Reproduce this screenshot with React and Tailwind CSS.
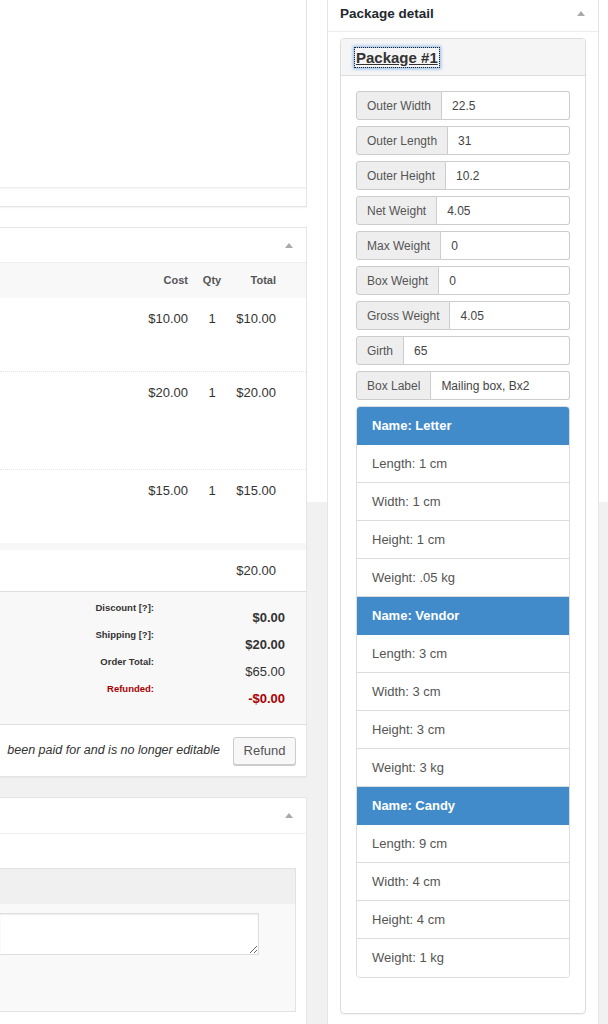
import React from "react";

function Tri() {
  return (
    <svg width="8" height="5" viewBox="0 0 8 5" className="block">
      <polygon points="4,0 8,5 0,5" fill="#aaaaaa" />
    </svg>
  );
}

function Cols({ cost, qty, total, className = "" }) {
  return (
    <div className={"flex justify-end pr-[30px] " + className}>
      <div className="w-[60px] text-right">{cost}</div>
      <div className="w-[48px] text-center">{qty}</div>
      <div className="w-[40px] text-right">{total}</div>
    </div>
  );
}

function TotalRow({ label, value, red, bold = true }) {
  return (
    <div className="flex justify-end h-[27px]">
      <div
        className={
          "text-right text-[9.5px] font-bold leading-[14px] whitespace-nowrap " +
          (red ? "text-[#aa0000]" : "text-[#333]")
        }
      >
        {label}
      </div>
      <div
        className={
          "w-[131px] text-right text-[13px] leading-[16px] mt-[9px] " +
          (bold ? "font-bold " : "") +
          (red ? "text-[#aa0000]" : "text-[#333]")
        }
      >
        {value}
      </div>
    </div>
  );
}

function InputGroup({ label, value }) {
  return (
    <div className="flex h-[29px] mb-[6px] text-[12px]">
      <div className="px-[10px] bg-[#eeeeee] border border-[#cccccc] rounded-l-[3px] text-[#555] flex items-center whitespace-nowrap">
        {label}
      </div>
      <div className="flex-1 border border-l-0 border-[#cccccc] rounded-r-[3px] px-[10px] flex items-center text-[#444] bg-white whitespace-nowrap">
        {value}
      </div>
    </div>
  );
}

const groups = [
  { name: "Letter", items: ["Length: 1 cm", "Width: 1 cm", "Height: 1 cm", "Weight: .05 kg"] },
  { name: "Vendor", items: ["Length: 3 cm", "Width: 3 cm", "Height: 3 cm", "Weight: 3 kg"] },
  { name: "Candy", items: ["Length: 9 cm", "Width: 4 cm", "Height: 4 cm", "Weight: 1 kg"] },
];

export default function App() {
  const listRows = [];
  groups.forEach((g) => {
    listRows.push({ text: "Name: " + g.name, active: true });
    g.items.forEach((t) => listRows.push({ text: t, active: false }));
  });

  return (
    <div className="w-[608px] h-[1024px] overflow-hidden flex bg-[linear-gradient(to_bottom,#ffffff_502px,#f1f1f1_502px)] font-['Liberation_Sans',Arial,sans-serif] text-[#333]">
      {/* Left column */}
      <div className="w-[307px] shrink-0 flex flex-col gap-[20px]">
        {/* Box 1 */}
        <div className="h-[207px] bg-white border-r border-b border-[#e5e5e5] shadow-[0_1px_1px_rgba(0,0,0,0.04)]">
          <div className="h-[188px] border-b border-[#eeeeee] shadow-[0_1px_1px_rgba(0,0,0,0.03)]"></div>
        </div>

        {/* Box 2 - order items */}
        <div className="bg-white border-t border-r border-b border-[#e5e5e5] shadow-[0_1px_1px_rgba(0,0,0,0.04)]">
          <div className="h-[35px] border-b border-[#eeeeee] flex items-center justify-end pr-[13px]">
            <Tri />
          </div>
          <Cols
            cost="Cost"
            qty="Qty"
            total="Total"
            className="h-[35px] items-center bg-[#f8f8f8] text-[11px] font-bold text-[#555]"
          />
          <Cols
            cost="$10.00"
            qty="1"
            total="$10.00"
            className="h-[74px] pt-[13px] text-[13px] leading-[16px] border-b border-dotted border-[#e2e2e2]"
          />
          <Cols
            cost="$20.00"
            qty="1"
            total="$20.00"
            className="h-[98px] pt-[13px] text-[13px] leading-[16px] border-b border-dotted border-[#e2e2e2]"
          />
          <Cols
            cost="$15.00"
            qty="1"
            total="$15.00"
            className="h-[73px] pt-[13px] text-[13px] leading-[16px]"
          />
          <div className="h-[7px] bg-[#f7f7f7]"></div>
          <Cols
            cost=""
            qty=""
            total="$20.00"
            className="h-[42px] pt-[13px] text-[13px] leading-[16px] border-b border-[#dfdfdf]"
          />
          <div className="h-[133px] bg-[#f8f8f8] border-b border-[#dfdfdf] pt-[9px] pr-[21px]">
            <TotalRow label="Discount [?]:" value="$0.00" />
            <TotalRow label="Shipping [?]:" value="$20.00" />
            <TotalRow label="Order Total:" value="$65.00" bold={false} />
            <TotalRow label="Refunded:" value="-$0.00" red />
          </div>
          <div className="h-[51px] flex items-center justify-end pr-[10px] gap-[13px]">
            <span className="italic text-[12.5px] text-[#333] whitespace-nowrap shrink-0">
              been paid for and is no longer editable
            </span>
            <button className="shrink-0 h-[28px] w-[63px] border border-[#cccccc] bg-[#f7f7f7] rounded-[3px] text-[13px] text-[#555] shadow-[0_1px_0_#cccccc]">
              Refund
            </button>
          </div>
        </div>

        {/* Box 3 - notes */}
        <div className="flex-1 bg-white border-t border-r border-[#e5e5e5]">
          <div className="h-[36px] border-b border-[#eeeeee] flex items-center justify-end pr-[13px]">
            <Tri />
          </div>
          <div className="pt-[34px] pr-[10px]">
            <div className="border border-l-0 border-[#e2e2e2]">
              <div className="h-[35px] bg-[#f0f0f0]"></div>
              <div className="bg-[#f9f9f9] pt-[9px] pb-[56px]">
                <textarea
                  readOnly
                  className="block w-[259px] h-[42px] bg-white border border-l-0 border-[#dddddd] shadow-[inset_0_1px_2px_rgba(0,0,0,0.07)] outline-none"
                ></textarea>
              </div>
            </div>
          </div>
        </div>
      </div>

      {/* Right column */}
      <div className="w-[272px] shrink-0 ml-[20px] bg-white border-l border-r border-[#e5e5e5] self-stretch">
        <div className="h-[32px] border-b border-[#eeeeee] pl-[12px] pr-[13px] pt-[4px] flex items-start justify-between">
          <span className="text-[13.5px] font-bold leading-[20px] text-[#23282d]">Package detail</span>
          <span className="mt-[7px]">
            <Tri />
          </span>
        </div>
        <div className="mx-[12px] mt-[6px] border border-[#dddddd] rounded-[4px] shadow-[0_1px_1px_rgba(0,0,0,0.05)]">
          <div className="h-[37px] bg-[#f5f5f5] border-b border-[#dddddd] rounded-t-[3px] pl-[14px] flex items-center">
            <span className="px-[1px] text-[15px] font-bold leading-[19px] text-[#333] underline outline outline-1 outline-dotted outline-[#222] shadow-[0_0_3px_2px_rgba(80,150,230,0.6)]">
              Package #1
            </span>
          </div>
          <div className="p-[15px]">
            <InputGroup label="Outer Width" value="22.5" />
            <InputGroup label="Outer Length" value="31" />
            <InputGroup label="Outer Height" value="10.2" />
            <InputGroup label="Net Weight" value="4.05" />
            <InputGroup label="Max Weight" value="0" />
            <InputGroup label="Box Weight" value="0" />
            <InputGroup label="Gross Weight" value="4.05" />
            <InputGroup label="Girth" value="65" />
            <InputGroup label="Box Label" value="Mailing box, Bx2" />
            <div className="mb-[20px] border border-[#dddddd] rounded-[4px] overflow-hidden">
              {listRows.map((r, i) => (
                <div
                  key={i}
                  className={
                    "h-[38px] flex items-center px-[15px] text-[13px] " +
                    (i < listRows.length - 1 ? "border-b " : "") +
                    (r.active
                      ? "bg-[#428bca] border-[#428bca] text-white font-bold"
                      : "bg-white border-[#dddddd] text-[#555]")
                  }
                >
                  {r.text}
                </div>
              ))}
            </div>
          </div>
        </div>
      </div>
    </div>
  );
}
